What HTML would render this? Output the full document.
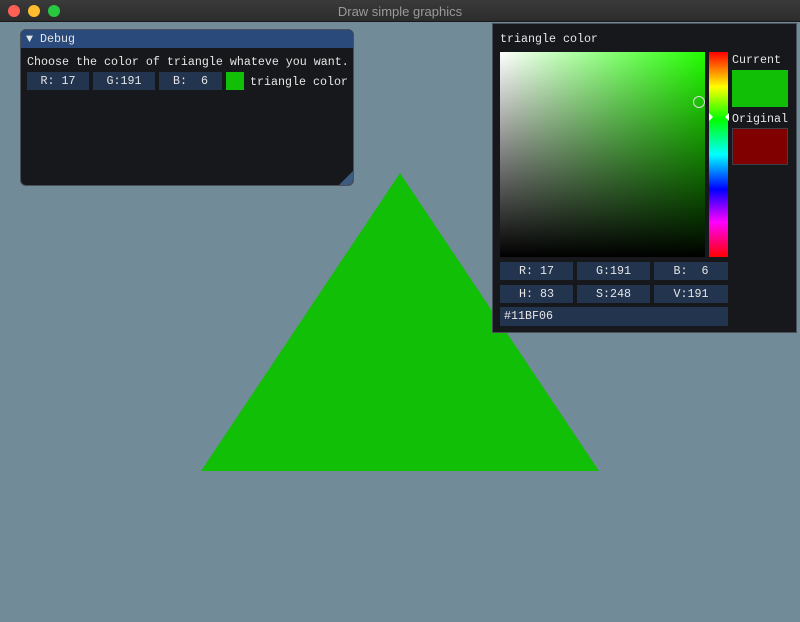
<!DOCTYPE html>
<html><head><style>
*{margin:0;padding:0;box-sizing:border-box}
body{width:800px;height:622px;background:#718b99;position:relative;overflow:hidden;font-family:"Liberation Mono",monospace;font-size:11.67px;color:#e6e6e6}
.a{position:absolute}
.in{position:absolute;background:#23344f;color:#e6e6e6;text-align:center;line-height:18px;height:18px;white-space:pre}
.t{position:absolute;white-space:pre;line-height:14px}
</style></head><body>
<div class="a" style="left:0;top:0;width:800px;height:22px;background:linear-gradient(#3a3a3a,#2c2c2c);border-bottom:1px solid #1a1a1a"></div>
<div class="a" style="left:8px;top:5px;width:12px;height:12px;border-radius:50%;background:#fe5f57"></div>
<div class="a" style="left:28px;top:5px;width:12px;height:12px;border-radius:50%;background:#febc2e"></div>
<div class="a" style="left:48px;top:5px;width:12px;height:12px;border-radius:50%;background:#28c840"></div>
<div class="a" style="left:0;top:4px;width:800px;text-align:center;font-family:'Liberation Sans',sans-serif;font-size:13px;color:#9a9a9a">Draw simple graphics</div>

<svg class="a" style="left:0;top:0" width="800" height="622"><polygon points="400,173 201,471 599,471" fill="#11bf06"/></svg>

<div class="a" style="left:20px;top:29px;width:334px;height:157px;background:#16181b;border:1px solid #4a4f5a;border-radius:6px;overflow:hidden">
 <div class="a" style="left:0;top:0;width:334px;height:18px;background:#294a7a"></div>
 <div class="t" style="left:5px;top:2px">▼ Debug</div>
 <div class="t" style="left:6px;top:25px">Choose the color of triangle whateve you want.</div>
 <div class="in" style="left:6px;top:42px;width:62px">R: 17</div>
 <div class="in" style="left:72px;top:42px;width:62px">G:191</div>
 <div class="in" style="left:138px;top:42px;width:63px">B:  6</div>
 <div class="a" style="left:205px;top:42px;width:18px;height:18px;background:#11bf06"></div>
 <div class="t" style="left:229px;top:45px">triangle color</div>
 <svg class="a" style="left:318px;top:141px" width="14" height="14"><polygon points="14,0 14,14 0,14" fill="#3d5a80"/></svg>
</div>

<div class="a" style="left:492px;top:23px;width:305px;height:310px;background:#16181b;border:1px solid #4a4f5a">
 <div class="t" style="left:7px;top:8px">triangle color</div>
 <div class="a" style="left:7px;top:28px;width:205px;height:205px;background:linear-gradient(to bottom,rgba(0,0,0,0),#000),linear-gradient(to right,#fff,#22ff00)"></div>
 <div class="a" style="left:200px;top:72px;width:12px;height:12px;border:1.5px solid #ddd;border-radius:50%"></div>
 <div class="a" style="left:216px;top:28px;width:19px;height:205px;background:linear-gradient(to bottom,#f00,#ff0 17%,#0f0 33%,#0ff 50%,#00f 67%,#f0f 83%,#f00)"></div>
 <svg class="a" style="left:213px;top:88px" width="26" height="10"><polygon points="3,1 7,5 3,9" fill="#fff"/><polygon points="23,1 19,5 23,9" fill="#fff"/></svg>
 <div class="t" style="left:239px;top:29px">Current</div>
 <div class="a" style="left:239px;top:46px;width:56px;height:37px;background:#11bf06"></div>
 <div class="t" style="left:239px;top:88px">Original</div>
 <div class="a" style="left:239px;top:104px;width:56px;height:37px;background:#800000;border:1px solid #3a3f4a"></div>
 <div class="in" style="left:7px;top:238px;width:73px">R: 17</div>
 <div class="in" style="left:84px;top:238px;width:73px">G:191</div>
 <div class="in" style="left:161px;top:238px;width:74px">B:  6</div>
 <div class="in" style="left:7px;top:261px;width:73px">H: 83</div>
 <div class="in" style="left:84px;top:261px;width:73px">S:248</div>
 <div class="in" style="left:161px;top:261px;width:74px">V:191</div>
 <div class="in" style="left:7px;top:283px;width:228px;height:19px;text-align:left;padding-left:4px">#11BF06</div>
</div>
</body></html>
